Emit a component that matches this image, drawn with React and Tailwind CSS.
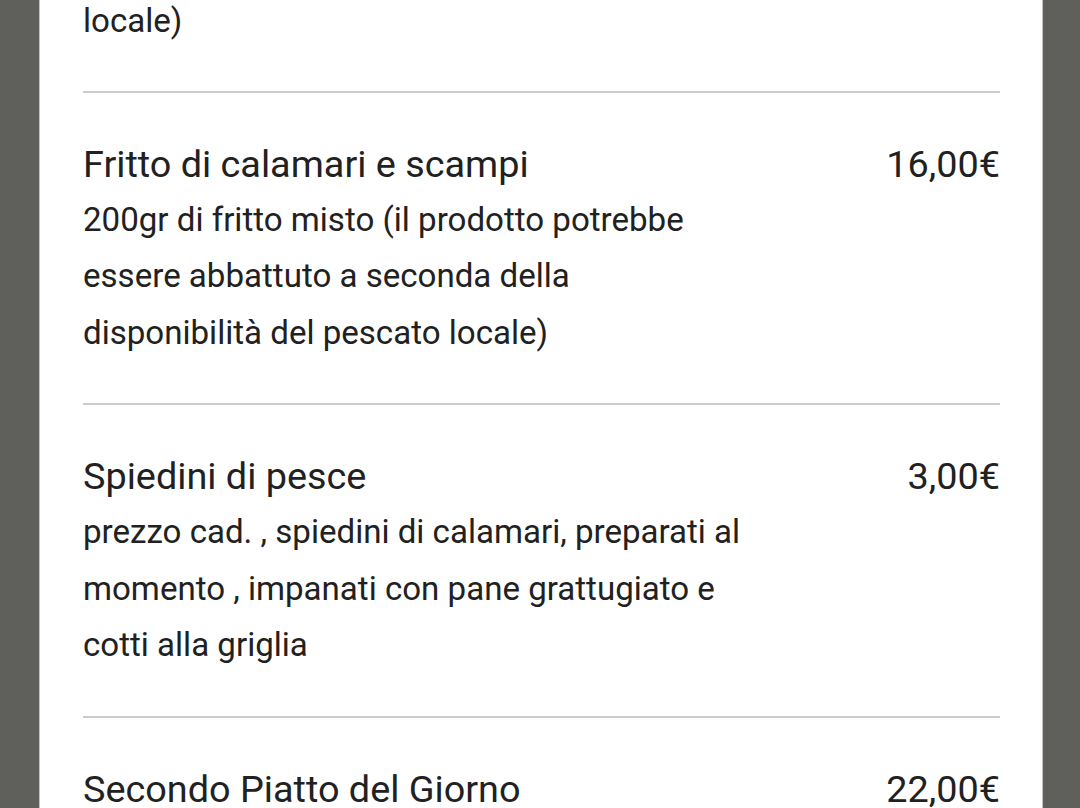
import React from "react";

const items = [
  {
    title: "Fritto di calamari e scampi",
    price: "16,00€",
    desc: "200gr di fritto misto (il prodotto potrebbe essere abbattuto a seconda della disponibilità del pescato locale)",
  },
  {
    title: "Spiedini di pesce",
    price: "3,00€",
    desc: "prezzo cad. , spiedini di calamari, preparati al momento , impanati con pane grattugiato e cotti alla griglia",
  },
  {
    title: "Secondo Piatto del Giorno",
    price: "22,00€",
    desc: "",
  },
];

export default function App() {
  return (
    <div
      className="h-[808px] w-[1080px] overflow-hidden bg-[#5f5f5b] flex"
      style={{ fontFamily: "Roboto, 'Noto Sans', sans-serif" }}
    >
      <div className="ml-[39px] w-[1004px] h-full bg-white border-x border-[#c4c4c2] pl-[43px] pr-[42px] text-[#212121]">
        <div className="-mt-[7px] pb-[41px]">
          <p className="text-[33.1px] leading-[56.5px]">locale)</p>
        </div>
        {items.map((it) => (
          <div key={it.title} className="border-t-2 border-[#cccccc] pt-[43px] pb-[42px]">
            <div className="flex justify-between items-start">
              <h3 className="text-[37.8px] leading-[56px] font-normal">{it.title}</h3>
              <span className="text-[37.8px] leading-[56px]">{it.price}</span>
            </div>
            {it.desc && (
              <p className="text-[33.1px] leading-[56.5px] w-[668px]">{it.desc}</p>
            )}
          </div>
        ))}
      </div>
    </div>
  );
}
